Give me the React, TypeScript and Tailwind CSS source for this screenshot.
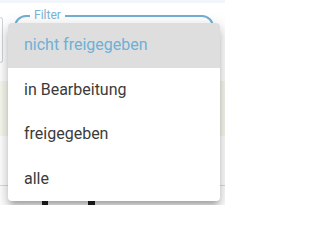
const OPTIONS = ["nicht freigegeben", "in Bearbeitung", "freigegeben", "alle"];

export default function App() {
  const selected = 0;

  return (
    <div className="relative w-[225px] h-[205px] overflow-hidden bg-white font-['Roboto','Liberation_Sans',sans-serif]">
      {/* top bar */}
      <div className="h-[3px] bg-[#f2f5f9]" />

      {/* filter row */}
      <div className="flex items-start pt-[12px] h-[78px]">
        <div className="w-[3px] h-[46px] mt-[2px] border-y border-r border-[#cfd4d8] rounded-r-[8px]" />
        <div className="relative ml-[11px] w-[200px] h-[56px] border-2 border-[#72b0d2] rounded-[12px]">
          <span className="absolute -top-[9px] left-[14px] px-[4px] bg-white text-[12px] leading-[14px] text-[#79b4d6]">
            Filter
          </span>
        </div>
      </div>

      {/* table header band */}
      <div className="h-[55px] bg-[#f7f8ee]" />
      <div className="h-[49px]" />
      <div className="h-px bg-[#dcdcdc]" />
      <div className="flex gap-[40px] pl-[42px] pt-[15px]">
        <div className="w-[6px] h-[4px] bg-[#222]" />
        <div className="w-[7px] h-[4px] bg-[#222]" />
      </div>

      {/* dropdown menu */}
      <ul className="absolute left-[8px] top-[23px] w-[212px] bg-white rounded-[4px] overflow-hidden shadow-[0_5px_5px_-3px_rgba(0,0,0,0.2),0_8px_10px_1px_rgba(0,0,0,0.14),0_3px_14px_2px_rgba(0,0,0,0.12)]">
        {OPTIONS.map((label, i) => (
          <li
            key={label}
            className={`h-[44.5px] flex items-center px-[16px] text-[16px] ${
              i === selected
                ? "bg-[#dedede] text-[#6eb0d6]"
                : "text-[#3b3b3b]"
            }`}
          >
            {label}
          </li>
        ))}
      </ul>
    </div>
  );
}
